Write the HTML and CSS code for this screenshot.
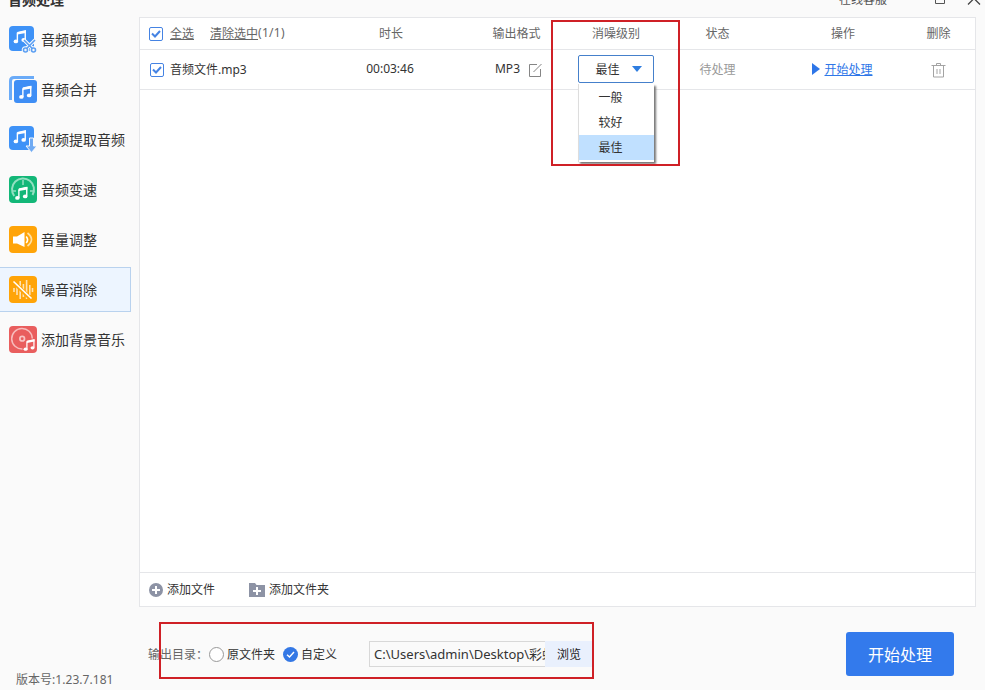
FILE: index.html
```html
<!DOCTYPE html>
<html lang="zh-CN">
<head>
  <meta charset="UTF-8">
  <meta name="viewport" content="width=device-width, initial-scale=1.0">
  <title>音频处理</title>
  <link rel="stylesheet" href="styles.css">
</head>
<body>
  <!-- Shared shapes -->
  <svg width="0" height="0" class="defs">
    <symbol id="note" viewBox="0 0 16 16">
      <path d="M5 3 L14 1 V11" fill="none" stroke="currentColor" stroke-width="1.6"/>
      <path d="M5 2.5 L14.7 .5 V3.3 L5 5.2 Z" fill="currentColor"/>
      <path d="M5 3 V13" stroke="currentColor" stroke-width="1.6"/>
      <ellipse cx="3.3" cy="13" rx="2.6" ry="2.1" fill="currentColor"/>
      <ellipse cx="12.2" cy="11.3" rx="2.6" ry="2.1" fill="currentColor"/>
    </symbol>
  </svg>

  <div class="app">
    <header class="titlebar">
      <span class="title">音频处理</span>
      <span class="service">在线客服</span>
      <svg class="win-max" width="12" height="17" viewBox="0 0 12 17"><path d="M1.5 -4V3.5H10.5V-4" fill="none" stroke="#555"/></svg>
      <svg class="win-close" width="14" height="17" viewBox="0 0 14 17"><path d="M1 4.5 L7 -1.5 L13 4.5" fill="none" stroke="#444" stroke-width="1.3"/></svg>
    </header>

    <nav class="sidebar">
      <a class="nav-item">
        <svg width="28" height="28" viewBox="0 0 28 28">
          <rect width="25" height="25" rx="4" fill="#3e92f7"/>
          <use href="#note" x="4" y="4" width="14" height="14" color="#fff"/>
          <g fill="none" stroke="#f9fafb" stroke-width="3.6"><path d="M15 14 L24 23 M26 14 L17 23"/><circle cx="16.5" cy="24" r="2"/><circle cx="24.5" cy="24" r="2"/></g>
          <g fill="none" stroke="#5c9ff2" stroke-width="1.6"><path d="M15 14 L23.3 22.5 M26 14 L17.7 22.5"/><circle cx="16.5" cy="24" r="2"/><circle cx="24.5" cy="24" r="2"/></g>
        </svg>
        <span>音频剪辑</span>
      </a>
      <a class="nav-item">
        <svg width="28" height="28" viewBox="0 0 28 28">
          <path d="M1.5 24 V5 Q1.5 1.5 5 1.5 H25" fill="none" stroke="#6aabf8" stroke-width="3"/>
          <rect x="5" y="4" width="23" height="23" rx="3" fill="#3e8ef5"/>
          <use href="#note" x="9.5" y="9.5" width="14" height="14" color="#fff"/>
        </svg>
        <span>音频合并</span>
      </a>
      <a class="nav-item">
        <svg width="28" height="28" viewBox="0 0 28 28">
          <rect width="25" height="24" rx="4" fill="#3e92f7"/>
          <use href="#note" x="4" y="4" width="14" height="14" color="#fff"/>
          <path d="M20.5 12 H24.5 V20 H28 L22.5 26.5 L17 20 H20.5 Z" fill="#6faaf3" stroke="#f9fafb" stroke-width="1"/>
        </svg>
        <span>视频提取音频</span>
      </a>
      <a class="nav-item">
        <svg width="28" height="28" viewBox="0 0 28 28">
          <rect width="28" height="27" rx="4" fill="#13b778"/>
          <path d="M5.2 20 A11 11 0 1 1 23.5 19" fill="none" stroke="#93e0c1" stroke-width="2"/>
          <path d="M14 4 V9 M3.5 15 H7 M21 15 H24.5" stroke="#93e0c1" stroke-width="1.5"/>
          <use href="#note" x="5.5" y="10.5" width="14" height="14" color="#fff"/>
        </svg>
        <span>音频变速</span>
      </a>
      <a class="nav-item">
        <svg width="28" height="28" viewBox="0 0 28 28">
          <rect width="28" height="27" rx="4" fill="#ffa408"/>
          <path d="M4 10.5 H8 L15.5 6 V21 L8 17.5 H4 Z" fill="#fff"/>
          <path d="M17.2 10.5 Q20 13.8 17.2 17" fill="none" stroke="#fff" stroke-width="1.6"/>
          <path d="M18.5 7 Q26.5 13.5 18.5 20" fill="none" stroke="#ffe0a2" stroke-width="1.7"/>
        </svg>
        <span>音量调整</span>
      </a>
      <a class="nav-item active">
        <svg width="28" height="28" viewBox="0 0 28 28">
          <rect width="28" height="27" rx="4" fill="#ffa408"/>
          <path d="M5 12 V16 M8 9 V19 M11.2 5 V23 M14.4 8 V21 M17.6 4 V23 M20.8 9 V19 M23.5 12 V16" stroke="#ffe2b3" stroke-width="1.6"/>
          <path d="M5 6.5 L22 23" stroke="#ffa408" stroke-width="4"/>
          <path d="M4.5 5.5 L22.5 22.5" stroke="#fff" stroke-width="1.7"/>
        </svg>
        <span>噪音消除</span>
      </a>
      <a class="nav-item">
        <svg width="28" height="28" viewBox="0 0 28 28">
          <rect width="28" height="27" rx="4" fill="#e95e5e"/>
          <path d="M13.5 23 A10.3 10.3 0 1 1 23.3 12.5" fill="none" stroke="#f7bcbc" stroke-width="1.5"/>
          <circle cx="13.2" cy="12.7" r="2.3" fill="none" stroke="#f8c4c4" stroke-width="1.7"/>
          <use href="#note" x="14" y="13" width="12.5" height="12.5" color="#fff"/>
        </svg>
        <span>添加背景音乐</span>
      </a>
      <div class="version">版本号<span>:1.23.7.181</span></div>
    </nav>

    <main class="main">
      <section class="panel">
        <div class="grid-row head">
          <div class="cell first">
            <i class="checkbox"><svg width="10" height="8" viewBox="0 0 10 8"><path d="M1 3.5 L4 6.5 L9 1"/></svg></i>
            <a class="link-all">全选</a>
            <a class="link-clear">清除选中</a><span class="count">(1/1)</span>
          </div>
          <div class="cell"><span>时长</span></div>
          <div class="cell"><span>输出格式</span></div>
          <div class="cell"><span>消噪级别</span></div>
          <div class="cell"><span>状态</span></div>
          <div class="cell"><span>操作</span></div>
          <div class="cell"><span>删除</span></div>
        </div>
        <div class="grid-row file">
          <div class="cell first">
            <i class="checkbox"><svg width="10" height="8" viewBox="0 0 10 8"><path d="M1 3.5 L4 6.5 L9 1"/></svg></i>
            <span class="filename">音频文件.mp3</span>
          </div>
          <div class="cell duration">00:03:46</div>
          <div class="cell format">
            <span>MP3</span>
            <svg width="14" height="14" viewBox="0 0 14 14" fill="none" stroke="#858585"><path d="M9 1.5 H1.5 V13.5 H12.5 V6"/><path d="M5.5 9 L13.5 1"/></svg>
          </div>
          <div class="cell level">
            <div class="select">
              <span>最佳</span>
              <i class="caret"></i>
              <ul class="dropdown">
                <li>一般</li>
                <li>较好</li>
                <li class="selected">最佳</li>
              </ul>
            </div>
          </div>
          <div class="cell status"><span>待处理</span></div>
          <div class="cell action"><i class="play"></i><a>开始处理</a></div>
          <div class="cell trash">
            <svg width="15" height="16" viewBox="0 0 15 16" fill="none" stroke="#a3a3a3"><path d="M.5 3.5 H14.5 M5.5 3.5 V1.5 H9.5 V3.5 M2.5 3.5 V15 H12.5 V3.5 M6 7 V12 M9 7 V12"/></svg>
          </div>
        </div>
        <div class="list-space"></div>
        <div class="panel-foot">
          <svg width="14" height="14" viewBox="0 0 14 14"><circle cx="7" cy="7" r="7" fill="#8d93a5"/><path d="M7 3 V11 M3 7 H11" stroke="#fff" stroke-width="2"/></svg>
          <span class="add-file">添加文件</span>
          <svg width="16" height="14" viewBox="0 0 16 14"><path d="M0 0 H6 L7.5 2 H16 V14 H0 Z" fill="#8d93a5"/><path d="M8 4 V12 M4 8 H12" stroke="#fff" stroke-width="2"/></svg>
          <span>添加文件夹</span>
        </div>
      </section>

      <footer class="output">
        <span class="output-label">输出目录：</span>
        <i class="radio"></i>
        <span class="radio-text">原文件夹</span>
        <svg width="15" height="15" viewBox="0 0 15 15"><circle cx="7.5" cy="7.5" r="7.5" fill="#3478e5"/><path d="M4 7.8 L6.5 10 L11 5" fill="none" stroke="#fff" stroke-width="1.4"/></svg>
        <span class="radio-text">自定义</span>
        <div class="path">C:\Users\admin\Desktop\彩虹</div>
        <button class="browse">浏览</button>
        <button class="start">开始处理</button>
      </footer>
    </main>

    <!-- Highlight frames -->
    <div class="mark mark-level"></div>
    <div class="mark mark-output"></div>
  </div>
</body>
</html>
```

FILE: styles.css
```css
* {
  box-sizing: border-box;
}
body {
  margin: 0;
  font-family: "Noto Sans", "Noto Sans CJK SC", sans-serif;
  font-size: 12px;
  color: #333;
  background: #fafafa;
}
.defs {
  position: absolute;
}
svg {
  display: block;
  flex: none;
}
button {
  border: none;
  padding: 0;
  font-family: inherit;
}
.app {
  position: relative;
  width: 985px;
  height: 690px;
  overflow: hidden;
  display: grid;
  grid-template-columns: 139px 1fr;
  grid-template-rows: 17px 1fr;
}

/* Title bar */
.titlebar {
  grid-column: 1 / 3;
  display: flex;
  overflow: hidden;
  line-height: 16px;
  padding-left: 8px;
}
.title {
  width: 831px;
  font-size: 14px;
  font-weight: bold;
  margin-top: -8px;
}
.service {
  width: 95px;
  margin-top: -8px;
  color: #555;
}
.win-close {
  margin-left: 21px;
}

/* Sidebar */
.sidebar {
  display: flex;
  flex-direction: column;
  gap: 5px;
}
.nav-item {
  display: flex;
  align-items: center;
  gap: 4px;
  width: 131px;
  height: 45px;
  padding-left: 9px;
  border: 1px solid transparent;
  border-left: none;
  font-size: 14px;
  white-space: nowrap;
}
.nav-item span {
  margin-bottom: 2px;
}
.nav-item.active {
  background: #edf5ff;
  border-color: #b9d2ee;
}
.version {
  margin: auto 0 1px 16px;
  line-height: 18px;
  color: #666;
}
.version span {
  letter-spacing: 0.05px;
}

/* File list */
.main {
  display: flex;
  flex-direction: column;
}
.panel {
  display: flex;
  flex-direction: column;
  width: 837px;
  height: 590px;
  background: #fff;
  border: 1px solid #e5e6e9;
}
.grid-row {
  display: grid;
  grid-template-columns: 186px 130px 121px 78px 125px 126px 65px;
  border-bottom: 1px solid #e5e6e9;
}
.head {
  height: 32px;
  color: #666;
}
.file {
  height: 40px;
}
.cell {
  display: flex;
  align-items: center;
  justify-content: center;
  white-space: nowrap;
}
.cell > span,
.cell > a,
.duration {
  padding-bottom: 2px;
}
.duration {
  padding-right: 2px;
}
.cell.first {
  justify-content: flex-start;
  padding-left: 9px;
}
.file .first {
  padding-left: 10px;
}
.checkbox {
  display: flex;
  align-items: center;
  justify-content: center;
  width: 14px;
  height: 14px;
  border: 1px solid #4583e3;
  border-radius: 2px;
}
.checkbox path {
  fill: none;
  stroke: #4583e3;
  stroke-width: 2;
}
.link-all {
  margin-left: 7px;
  text-decoration: underline;
}
.link-clear {
  margin-left: 16px;
  text-decoration: underline;
}
.count {
  letter-spacing: 0.3px;
}
.filename {
  margin-left: 6px;
}
.format {
  gap: 8px;
  padding-left: 4px;
}
.status {
  color: #999;
}
.action {
  gap: 4px;
  padding-right: 1px;
}
.action .play {
  margin-bottom: 2px;
}
.action a {
  color: #2e76e8;
  text-decoration: underline;
}
.play {
  border: 6px solid transparent;
  border-left: 8px solid #2e76e8;
  border-right: none;
}
.trash {
  padding-right: 1px;
}

/* Noise level select */
.level {
  padding: 0 1px 2px 0;
}
.select {
  position: relative;
  flex: none;
  display: flex;
  align-items: center;
  gap: 12px;
  width: 76px;
  height: 28px;
  padding-left: 17px;
  border: 1px solid #4580cb;
  border-radius: 2px;
  background: #fff;
}
.caret {
  border: 5px solid transparent;
  border-top: 6px solid #2e7de0;
  border-bottom: none;
}
.dropdown {
  position: absolute;
  top: 28px;
  left: -1px;
  width: 76px;
  height: 78px;
  margin: 0;
  padding: 1px 0 0;
  list-style: none;
  background: #fff;
  border-left: 1px solid #ddd;
  box-shadow: 2px 2px 2px #777;
}
.dropdown li {
  height: 25px;
  line-height: 25px;
  padding-left: 20px;
}
.dropdown .selected {
  background: #c0e0ff;
}

.list-space {
  flex: 1;
}
.panel-foot {
  display: flex;
  align-items: center;
  height: 34px;
  padding-left: 9px;
  gap: 4px;
  border-top: 1px solid #e5e6e9;
}
.panel-foot span {
  padding-bottom: 2px;
}
.add-file {
  width: 78px;
}

/* Output settings */
.output {
  display: flex;
  align-items: center;
  height: 83px;
  padding: 11px 31px 0 9px;
}
.output-label {
  width: 61px;
  color: #666;
  white-space: nowrap;
}
.radio {
  width: 15px;
  height: 15px;
  border: 1px solid #999;
  border-radius: 50%;
  background: #fff;
}
.radio-text {
  margin: 0 8px 0 3px;
}
.path {
  width: 176px;
  height: 26px;
  margin-left: 24px;
  padding-left: 4px;
  line-height: 24px;
  font-size: 13px;
  white-space: nowrap;
  overflow: hidden;
  border: 1px solid #d8d8d8;
  border-right: none;
}
.browse {
  width: 48px;
  height: 26px;
  background: #e9f0fd;
  font-size: 12px;
  color: #222;
}
.start {
  width: 108px;
  height: 44px;
  margin-left: auto;
  border-radius: 3px;
  background: #337aec;
  color: #fff;
  font-size: 16px;
}

.mark {
  position: absolute;
  border: 2px solid #cf2026;
}
.mark-level {
  left: 551px;
  top: 20px;
  width: 129px;
  height: 146px;
}
.mark-output {
  left: 159px;
  top: 622px;
  width: 435px;
  height: 57px;
}
```
